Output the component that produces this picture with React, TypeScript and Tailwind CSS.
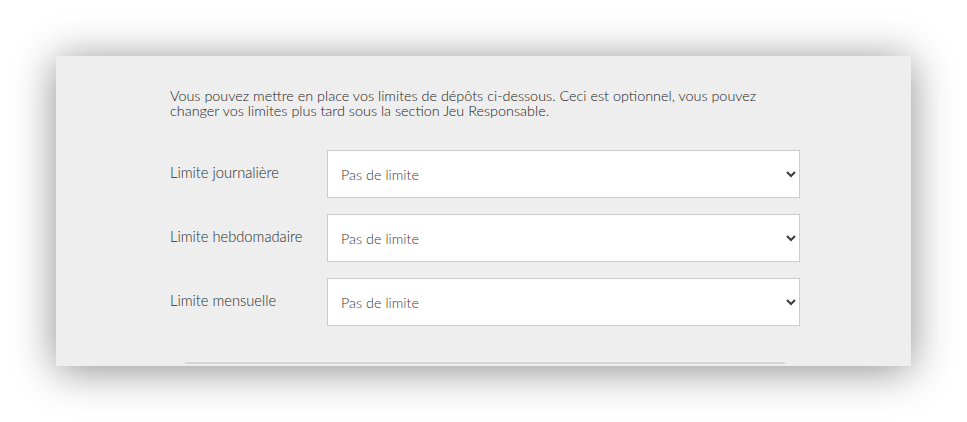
import React from 'react';

const limits = [
  { id: 'daily', label: 'Limite journalière' },
  { id: 'weekly', label: 'Limite hebdomadaire' },
  { id: 'monthly', label: 'Limite mensuelle' },
];

export default function App() {
  return (
    <div className="min-h-screen bg-white pt-[56px] pl-[56px] font-['Lato',sans-serif]">
      {/* Modal panel, cut off at the bottom like a scrolled dialog */}
      <div className="w-[855px] h-[310px] overflow-hidden bg-[#eeeeee] shadow-[0_4px_40px_rgba(0,0,0,0.45)]">
        <div className="w-[630px] ml-[114px] pt-[32px]">
          <p className="text-[14.4px] leading-[15px] font-light text-[#222222]">
            Vous pouvez mettre en place vos limites de dépôts ci-dessous. Ceci est optionnel, vous pouvez changer vos limites plus tard sous la section Jeu Responsable.
          </p>

          <div className="mt-[32px] flex flex-col gap-[16px]">
            {limits.map((l) => (
              <div key={l.id} className="flex items-center">
                <label
                  htmlFor={l.id}
                  className="w-[157px] pb-[3px] text-[14.7px] font-light text-[#2a2a2a]"
                >
                  {l.label}
                </label>
                <select
                  id={l.id}
                  defaultValue="none"
                  className="w-[473px] h-[48px] bg-white border border-[#cccccc] pl-[9px] pr-[6px] text-[14.4px] font-light text-[#3a3a3a] outline-none"
                >
                  <option value="none">Pas de limite</option>
                  <option value="50">50 €</option>
                  <option value="100">100 €</option>
                  <option value="500">500 €</option>
                </select>
              </div>
            ))}
          </div>

          <div className="mt-[36px] ml-[15px] w-[600px] h-[2px] bg-[#d6d6d6]" />
        </div>
      </div>
    </div>
  );
}
